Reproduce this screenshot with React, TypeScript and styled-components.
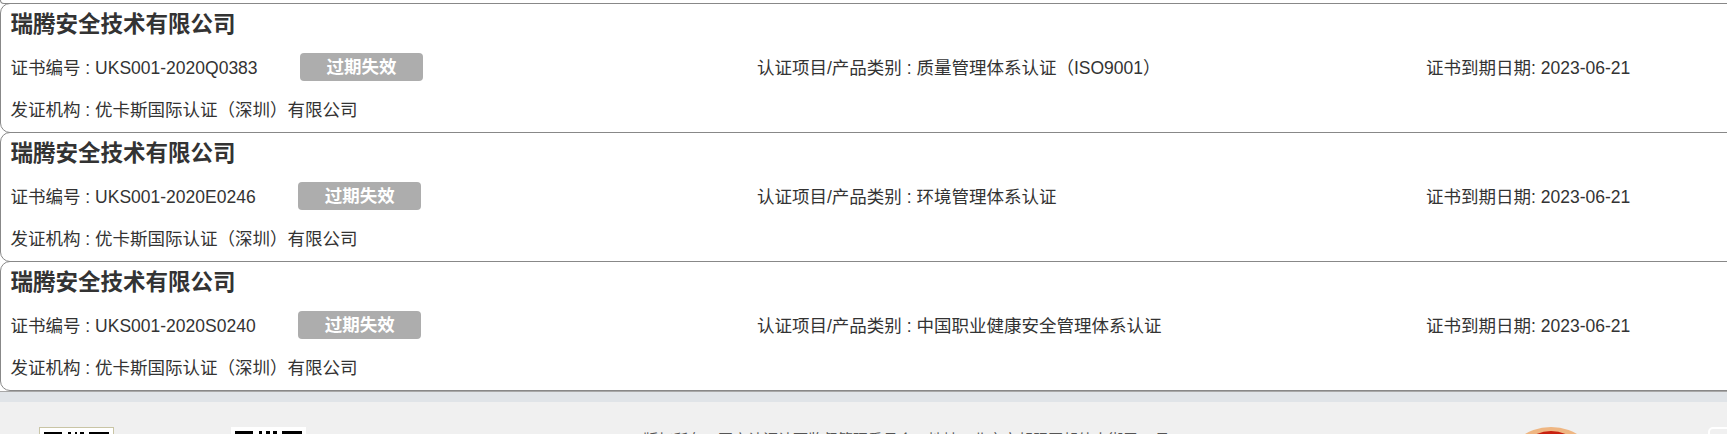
import React from 'react'
import styled, { createGlobalStyle } from 'styled-components'

const GlobalStyle = createGlobalStyle`
  html, body {
    margin: 0;
    padding: 0;
    background: #fff;
    overflow: hidden;
  }

  body {
    font-family: "Liberation Sans", "Noto Sans CJK SC", sans-serif;
    color: #333;
  }
`

const Page = styled.div`
  height: 434px;
  overflow: hidden;
`

const List = styled.div`
  overflow: hidden;
  border-bottom: 1px solid #a8a8a8;
`

const PrevCardEnd = styled.div`
  box-sizing: border-box;
  height: 4px;
  margin-right: -20px;
  border: 1px solid #888;
  border-top: 0;
  border-radius: 0 0 10px 10px;
`

const Card = styled.div`
  box-sizing: border-box;
  height: 130px;
  margin-top: -1px;
  margin-right: -20px;
  padding-left: 9.5px;
  border: 1px solid #888;
  border-radius: 10px;
`

const Company = styled.h3`
  margin: 0;
  height: 41px;
  line-height: 42px;
  font-size: 22.5px;
  font-weight: bold;
  color: #333;
`

const InfoRow = styled.div`
  display: grid;
  grid-template-columns: 746.5px 669px 1fr;
  height: 42px;
  align-items: center;
  font-size: 17.5px;
`

const CertNo = styled.div`
  display: flex;
  align-items: center;
`

const Badge = styled.span`
  width: 123px;
  height: 28px;
  margin: 2px 0 0 42.5px;
  border-radius: 4px;
  background: #adadad;
  color: #fff;
  font-size: 17.5px;
  font-weight: bold;
  line-height: 28px;
  text-align: center;
`

const Footer = styled.footer`
  display: flex;
  align-items: flex-start;
  height: 42px;
  padding-top: 25px;
  box-sizing: border-box;
  border-top: 10px solid #e0e4e8;
  background: #f0f0f0;
  overflow: hidden;
`

const QrFrame = styled.div<{ $framed?: boolean; $gap: number }>`
  flex: none;
  box-sizing: border-box;
  width: 75px;
  height: 75px;
  margin-left: ${p => p.$gap}px;
  padding: 4px 3px;
  background: #fff;
  border: ${p => (p.$framed ? '1px solid #c9c5a5' : '0')};
`

const FooterText = styled.div`
  flex: none;
  width: 525px;
  margin: 3px 0 0 337px;
  font-size: 15px;
  line-height: 20px;
  color: #555;
  white-space: nowrap;
`

const Emblem = styled.svg`
  flex: none;
  width: 92px;
  height: 80px;
  margin-left: 337px;
`

const SideBox = styled.div`
  flex: none;
  box-sizing: border-box;
  width: 60px;
  height: 60px;
  margin-left: 111px;
  border: 2px solid #fff;
  border-radius: 5px;
`

const QrCode = () => (
  <svg width="100%" height="100%" viewBox="0 0 66 66" shapeRendering="crispEdges">
    <path
      fill="#000"
      d="M0 0h18v3H0zM24 0h3v8h-3zM31 0h3v6h-3zM37 0h4v6h-4zM46 0h20v3H46zM0 3h3v16H0zM15 3h3v16h-3zM46 3h3v16h-3zM63 3h3v16h-3z"
    />
  </svg>
)

const certificates = [
  { no: 'UKS001-2020Q0383', scope: '质量管理体系认证（ISO9001）' },
  { no: 'UKS001-2020E0246', scope: '环境管理体系认证' },
  { no: 'UKS001-2020S0240', scope: '中国职业健康安全管理体系认证' },
]

export default function App() {
  return (
    <Page>
      <GlobalStyle />
      <List>
        <PrevCardEnd />
        {certificates.map(cert => (
          <Card key={cert.no}>
            <Company>瑞腾安全技术有限公司</Company>
            <InfoRow>
              <CertNo>
                证书编号 : {cert.no}
                <Badge>过期失效</Badge>
              </CertNo>
              <div>认证项目/产品类别 : {cert.scope}</div>
              <div>证书到期日期: 2023-06-21</div>
            </InfoRow>
            <InfoRow>
              <div>发证机构 : 优卡斯国际认证（深圳）有限公司</div>
            </InfoRow>
          </Card>
        ))}
      </List>
      <Footer>
        <QrFrame $framed $gap={39}>
          <QrCode />
        </QrFrame>
        <QrFrame $gap={117}>
          <QrCode />
        </QrFrame>
        <FooterText>版权所有：国家认证认可监督管理委员会　地址：北京市朝阳区朝外大街甲10号</FooterText>
        <Emblem viewBox="0 0 92 80">
          <ellipse cx="46" cy="40" rx="46" ry="40" fill="#efb682" />
          <ellipse cx="46" cy="44" rx="38" ry="40" fill="#c8200f" />
        </Emblem>
        <SideBox />
      </Footer>
    </Page>
  )
}
